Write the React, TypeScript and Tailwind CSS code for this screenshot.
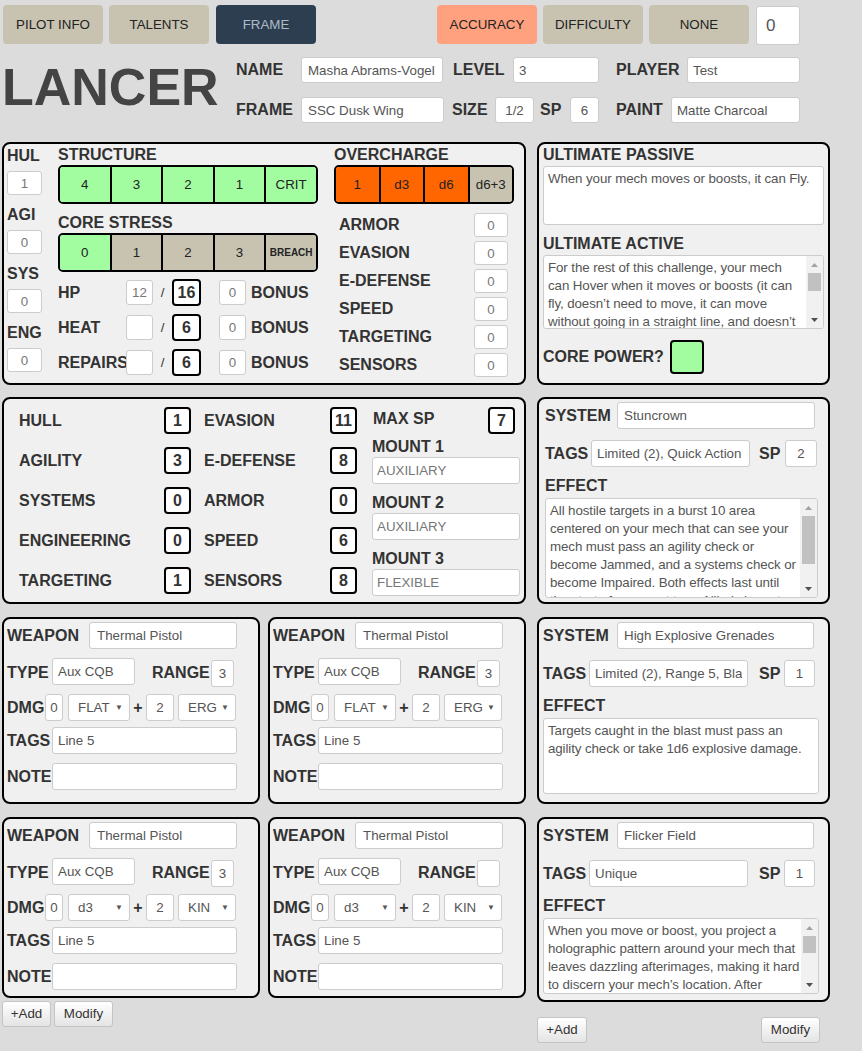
import React from "react";

const L = "font-bold text-[16px] leading-[18px] text-[#333] whitespace-nowrap";
const IN =
  "bg-white border border-[#cccccc] rounded-[3px] text-[13.33px] text-[#555] outline-none";

function Field({ value = "", className = "" }: { value?: string; className?: string }) {
  return <input readOnly value={value} className={`${IN} block ${className}`} />;
}

function Box({ value, className = "" }: { value: string; className?: string }) {
  return (
    <div
      className={`bg-white border-2 border-black rounded-[4px] flex items-center justify-center font-bold text-[16px] text-[#333] ${className}`}
    >
      {value}
    </div>
  );
}

function Area({
  value,
  className = "",
  thumb,
  pad = "pl-[4px] pr-0",
}: {
  value: string;
  className?: string;
  thumb?: string;
  pad?: string;
}) {
  return (
    <div className={`${IN} flex overflow-hidden ${className}`}>
      <div className={`flex-1 ${pad} pt-[3px] leading-[18px] tracking-[-0.1px] overflow-hidden`}>{value}</div>
      {thumb ? (
        <div className="w-[17px] shrink-0 bg-[#f1f1f1] flex flex-col">
          <div className="h-[17px] flex items-center justify-center">
            <svg width="7" height="4" viewBox="0 0 7 4">
              <path d="M0 4 L3.5 0 L7 4 Z" fill="#a3a3a3" />
            </svg>
          </div>
          <div className="flex-1 px-[2px]">
            <div className={`bg-[#c1c1c1] w-full ${thumb}`} />
          </div>
          <div className="h-[17px] flex items-center justify-center">
            <svg width="7" height="4" viewBox="0 0 7 4">
              <path d="M0 0 L3.5 4 L7 0 Z" fill="#505050" />
            </svg>
          </div>
        </div>
      ) : null}
    </div>
  );
}

function Select({ value, className = "" }: { value: string; className?: string }) {
  return (
    <div className={`${IN} h-[27px] flex items-center justify-between pl-[9px] pr-[6px] ${className}`}>
      <span>{value}</span>
      <span className="text-[8px] text-[#555]">▼</span>
    </div>
  );
}

type Cell = { t: string; c: string; small?: boolean };

function Bar({ cells, className = "" }: { cells: Cell[]; className?: string }) {
  return (
    <div className={`flex border-2 border-black rounded-[5px] overflow-hidden h-[39px] ${className}`}>
      {cells.map((c, i) => (
        <div
          key={i}
          className={`flex-1 flex items-center justify-center text-[#222] ${
            c.small ? "text-[10px] font-bold" : "text-[13.33px]"
          } ${i > 0 ? "border-l-2 border-black" : ""} ${c.c}`}
        >
          {c.t}
        </div>
      ))}
    </div>
  );
}

const G = "bg-[#a2fda0]";
const T = "bg-[#c8c3b1]";
const O = "bg-[#ff6600]";

function TopBtn({ children, className = "" }: { children: React.ReactNode; className?: string }) {
  return (
    <div
      className={`w-[100px] h-[39px] rounded-[4px] flex items-center justify-center text-[13.33px] ${className}`}
    >
      {children}
    </div>
  );
}

function SmallBtn({ children, className = "" }: { children: React.ReactNode; className?: string }) {
  return (
    <div
      className={`h-[26px] flex items-center justify-center border border-[#c4c4c4] rounded-[3px] bg-linear-to-b from-white to-[#e4e4e4] text-[13.33px] text-[#333] ${className}`}
    >
      {children}
    </div>
  );
}

function Weapon({
  dmgType,
  kind,
  range,
  h,
}: {
  dmgType: string;
  kind: string;
  range: string;
  h: string;
}) {
  return (
    <div className={`w-[258px] ${h} border-2 border-black rounded-[8px] bg-[#f0f0f0] pl-[3px] pt-[3px]`}>
      <div className="flex items-center h-[27px]">
        <div className={`${L} w-[82px]`}>WEAPON</div>
        <Field value="Thermal Pistol" className="w-[148px] h-[27px] px-[7px]" />
      </div>
      <div className="flex items-center h-[29px] mt-[9px]">
        <div className={`${L} w-[45px]`}>TYPE</div>
        <Field value="Aux CQB" className="w-[83px] h-[27px] px-[5px] self-start" />
        <div className={`${L} w-[59px] ml-[17px]`}>RANGE</div>
        <Field value={range} className="w-[23px] h-[27px] text-center self-end" />
      </div>
      <div className="flex items-center h-[27px] mt-[7px]">
        <div className={`${L} w-[38px]`}>DMG</div>
        <Field value="0" className="w-[18px] h-[27px] text-center" />
        <Select value={dmgType} className="w-[62px] ml-[5px]" />
        <div className="w-[16px] text-center font-bold text-[16px] text-[#333]">+</div>
        <Field value="2" className="w-[28px] h-[27px] text-center" />
        <Select value={kind} className="w-[58px] ml-[4px]" />
      </div>
      <div className="flex items-center h-[27px] mt-[6px]">
        <div className={`${L} w-[45px]`}>TAGS</div>
        <Field value="Line 5" className="w-[185px] h-[27px] px-[5px]" />
      </div>
      <div className="flex items-center h-[27px] mt-[9px]">
        <div className={`${L} w-[45px]`}>NOTE</div>
        <Field value="" className="w-[185px] h-[27px] px-[5px]" />
      </div>
    </div>
  );
}

function System({
  name,
  tags,
  sp,
  effect,
  h,
  areaClass,
  thumb,
  first = false,
}: {
  name: string;
  tags: string;
  sp: string;
  effect: string;
  h: string;
  areaClass: string;
  thumb?: string;
  first?: boolean;
}) {
  return (
    <div
      className={`w-[293px] ${h} border-2 border-black rounded-[8px] bg-[#f0f0f0] pt-[3px] ${
        first ? "pl-[6px]" : "pl-[4px]"
      }`}
    >
      <div className="flex items-center h-[27px]">
        <div className={`${L} ${first ? "w-[72px]" : "w-[74px]"}`}>SYSTEM</div>
        <Field value={name} className={`h-[27px] px-[6px] ${first ? "w-[198px]" : "w-[197px]"}`} />
      </div>
      <div className="flex items-center h-[27px] mt-[11px]">
        <div className={`${L} w-[46px]`}>TAGS</div>
        <Field value={tags} className="w-[159px] h-[27px] px-[5px]" />
        <div className={`${L} ${first ? "w-[26px] ml-[9px]" : "w-[25px] ml-[11px]"}`}>SP</div>
        <Field value={sp} className={`h-[27px] text-center ${first ? "w-[32px]" : "w-[31px]"}`} />
      </div>
      <div className={`${L} mt-[10px]`}>EFFECT</div>
      <Area
        value={effect}
        className={`mt-[3px] ${first ? "w-[273px]" : "w-[276px]"} ${areaClass}`}
        thumb={thumb}
      />
    </div>
  );
}

export default function App() {
  return (
    <div className="w-[862px] min-h-[1051px] bg-[#dcdcdc] font-['Liberation_Sans',Arial,sans-serif] overflow-hidden">
      {/* top buttons */}
      <div className="flex pt-[5px] pl-[3px] items-start">
        <TopBtn className="bg-[#c8c3b1] text-[#222]">PILOT INFO</TopBtn>
        <TopBtn className="bg-[#c8c3b1] text-[#222] ml-[6px]">TALENTS</TopBtn>
        <TopBtn className="bg-[#2c3e4f] text-[#aebac6] ml-[7px]">FRAME</TopBtn>
        <TopBtn className="bg-[#ffa07f] text-[#222] ml-[121px]">ACCURACY</TopBtn>
        <TopBtn className="bg-[#c8c3b1] text-[#222] ml-[6px]">DIFFICULTY</TopBtn>
        <TopBtn className="bg-[#c8c3b1] text-[#222] ml-[6px]">NONE</TopBtn>
        <Field value="0" className="w-[44px] h-[39px] mt-[1px] ml-[7px] px-[9px] text-[17px] text-[#333]" />
      </div>

      {/* header */}
      <div className="flex mt-[12px]">
        <div className="w-[236px] pl-[2px] pt-[4px] text-[52px] leading-none font-bold text-[#444]">LANCER</div>
        <div className="flex flex-col gap-[14px]">
          <div className="flex items-center h-[26px]">
            <div className={`${L} w-[65px]`}>NAME</div>
            <Field value="Masha Abrams-Vogel" className="w-[142px] h-[26px] px-[6px]" />
            <div className={`${L} w-[60px] ml-[10px]`}>LEVEL</div>
            <Field value="3" className="w-[86px] h-[26px] px-[5px]" />
            <div className={`${L} w-[71px] ml-[17px]`}>PLAYER</div>
            <Field value="Test" className="w-[113px] h-[26px] px-[5px]" />
          </div>
          <div className="flex items-center h-[26px]">
            <div className={`${L} w-[65px]`}>FRAME</div>
            <Field value="SSC Dusk Wing" className="w-[143px] h-[26px] px-[6px]" />
            <div className={`${L} w-[43px] ml-[8px]`}>SIZE</div>
            <Field value="1/2" className="w-[39px] h-[26px] text-center" />
            <div className={`${L} w-[30px] ml-[6px]`}>SP</div>
            <Field value="6" className="w-[29px] h-[26px] text-center" />
            <div className={`${L} w-[55px] ml-[17px]`}>PAINT</div>
            <Field value="Matte Charcoal" className="w-[129px] h-[26px] px-[5px]" />
          </div>
        </div>
      </div>

      {/* main */}
      <div className="mt-[19px] pl-[2px] flex flex-col">
        {/* row A */}
        <div className="flex gap-[11px]">
          <div className="w-[524px] h-[243px] border-2 border-black rounded-[8px] bg-[#f0f0f0] flex">
            <div className="w-[54px] pl-[3px] pt-[3px] flex flex-col">
              {[
                ["HUL", "1"],
                ["AGI", "0"],
                ["SYS", "0"],
                ["ENG", "0"],
              ].map(([k, v], i) => (
                <div key={k} className={i > 0 ? "mt-[11px]" : ""}>
                  <div className={L}>{k}</div>
                  <Field value={v} className="mt-[6px] w-[35px] h-[24px] text-center text-[#777]" />
                </div>
              ))}
            </div>
            <div className="w-[260px] pt-[2px] flex flex-col">
              <div className={L}>STRUCTURE</div>
              <Bar
                className="mt-[1px]"
                cells={[
                  { t: "4", c: G },
                  { t: "3", c: G },
                  { t: "2", c: G },
                  { t: "1", c: G },
                  { t: "CRIT", c: G },
                ]}
              />
              <div className={`${L} mt-[10px]`}>CORE STRESS</div>
              <Bar
                className="mt-[1px]"
                cells={[
                  { t: "0", c: G },
                  { t: "1", c: T },
                  { t: "2", c: T },
                  { t: "3", c: T },
                  { t: "BREACH", c: T, small: true },
                ]}
              />
              <div className="mt-[7px] flex flex-col gap-[8px]">
                {[
                  ["HP", "12", "16"],
                  ["HEAT", "", "6"],
                  ["REPAIRS", "", "6"],
                ].map(([k, a, b]) => (
                  <div key={k} className="flex items-center h-[27px]">
                    <div className={`${L} w-[68px]`}>{k}</div>
                    <Field value={a} className="w-[27px] h-[25px] text-center text-[#777]" />
                    <div className="w-[19px] text-center text-[13.33px] text-[#333]">/</div>
                    <Box value={b} className="w-[29px] h-[27px]" />
                    <Field value="0" className="w-[27px] h-[25px] ml-[18px] text-center text-[#777]" />
                    <div className={`${L} ml-[5px]`}>BONUS</div>
                  </div>
                ))}
              </div>
            </div>
            <div className="w-[180px] ml-[16px] pt-[2px] flex flex-col">
              <div className={L}>OVERCHARGE</div>
              <Bar
                className="mt-[1px]"
                cells={[
                  { t: "1", c: O },
                  { t: "d3", c: O },
                  { t: "d6", c: O },
                  { t: "d6+3", c: T },
                ]}
              />
              <div className="mt-[9px] flex flex-col gap-[4px]">
                {["ARMOR", "EVASION", "E-DEFENSE", "SPEED", "TARGETING", "SENSORS"].map((k) => (
                  <div key={k} className="flex items-center justify-between h-[24px] pl-[5px] pr-[6px]">
                    <div className={L}>{k}</div>
                    <Field value="0" className="w-[34px] h-[24px] text-center text-[#777]" />
                  </div>
                ))}
              </div>
            </div>
          </div>

          <div className="w-[293px] h-[243px] border-2 border-black rounded-[8px] bg-[#f0f0f0] px-[4px] pt-[2px]">
            <div className={L}>ULTIMATE PASSIVE</div>
            <Area
              value="When your mech moves or boosts, it can Fly."
              className="mt-[2px] w-[281px] h-[59px]"
              pad="pl-[4px] pr-[2px]"
            />
            <div className={`${L} mt-[10px]`}>ULTIMATE ACTIVE</div>
            <Area
              value="For the rest of this challenge, your mech can Hover when it moves or boosts (it can fly, doesn’t need to move, it can move without going in a straight line, and doesn’t need to land at the end of its movement)."
              className="mt-[2px] w-[281px] h-[74px]"
              thumb="h-[18px]"
              pad="pl-[4px] pr-[2px]"
            />
            <div className="flex items-center mt-[11px]">
              <div className={L}>CORE POWER?</div>
              <div className="w-[34px] h-[34px] ml-[6px] border-2 border-black rounded-[4px] bg-[#a2fda0]" />
            </div>
          </div>
        </div>

        {/* row B */}
        <div className="flex gap-[11px] mt-[12px]">
          <div className="w-[524px] h-[207px] border-2 border-black rounded-[8px] bg-[#f0f0f0] flex pt-[8px]">
            <div className="grid grid-cols-[145px_27px_139px_27px] gap-y-[13px] ml-[15px] h-fit">
              {[
                ["HULL", "1", "EVASION", "11"],
                ["AGILITY", "3", "E-DEFENSE", "8"],
                ["SYSTEMS", "0", "ARMOR", "0"],
                ["ENGINEERING", "0", "SPEED", "6"],
                ["TARGETING", "1", "SENSORS", "8"],
              ].map(([a, av, b, bv]) => (
                <React.Fragment key={a}>
                  <div className={`${L} h-[27px] flex items-center`}>{a}</div>
                  <Box value={av} className="w-[27px] h-[27px]" />
                  <div className={`${L} h-[27px] flex items-center pl-[13px]`}>{b}</div>
                  <Box value={bv} className="w-[27px] h-[27px]" />
                </React.Fragment>
              ))}
            </div>
            <div className="ml-[15px] w-[148px] flex flex-col">
              <div className="flex items-center justify-between h-[27px] pr-[5px]">
                <div className={`${L} pl-[1px] -mt-[3px]`}>MAX SP</div>
                <Box value="7" className="w-[27px] h-[27px]" />
              </div>
              <div className={`${L} mt-[4px]`}>MOUNT 1</div>
              <Field value="AUXILIARY" className="mt-[1px] w-[148px] h-[27px] px-[4px] text-[#777]" />
              <div className={`${L} mt-[10px]`}>MOUNT 2</div>
              <Field value="AUXILIARY" className="mt-[1px] w-[148px] h-[27px] px-[4px] text-[#777]" />
              <div className={`${L} mt-[10px]`}>MOUNT 3</div>
              <Field value="FLEXIBLE" className="mt-[1px] w-[148px] h-[27px] px-[4px] text-[#777]" />
            </div>
          </div>
          <System
            first
            name="Stuncrown"
            tags="Limited (2), Quick Action"
            sp="2"
            effect="All hostile targets in a burst 10 area centered on your mech that can see your mech must pass an agility check or become Jammed, and a systems check or become Impaired. Both effects last until the start of your next turn. Allied characters are unaffected."
            h="h-[207px]"
            areaClass="h-[100px]"
            thumb="h-[48px]"
          />
        </div>

        {/* row C */}
        <div className="flex gap-[11px] mt-[13px]">
          <div className="flex gap-[8px]">
            <Weapon dmgType="FLAT" kind="ERG" range="3" h="h-[187px]" />
            <Weapon dmgType="FLAT" kind="ERG" range="3" h="h-[187px]" />
          </div>
          <System
            name="High Explosive Grenades"
            tags="Limited (2), Range 5, Blast 1"
            sp="1"
            effect="Targets caught in the blast must pass an agility check or take 1d6 explosive damage."
            h="h-[187px]"
            areaClass="h-[76px]"
          />
        </div>

        {/* row D */}
        <div className="flex gap-[11px] mt-[13px] items-start">
          <div className="flex flex-col">
            <div className="flex gap-[8px]">
              <Weapon dmgType="d3" kind="KIN" range="3" h="h-[181px]" />
              <Weapon dmgType="d3" kind="KIN" range="" h="h-[181px]" />
            </div>
            <div className="flex gap-[3px] mt-[3px]">
              <SmallBtn className="w-[49px]">+Add</SmallBtn>
              <SmallBtn className="w-[59px]">Modify</SmallBtn>
            </div>
          </div>
          <div className="flex flex-col">
            <System
              name="Flicker Field"
              tags="Unique"
              sp="1"
              effect="When you move or boost, you project a holographic pattern around your mech that leaves dazzling afterimages, making it hard to discern your mech’s location. After moving, you gain soft cover until the start of your next turn."
              h="h-[185px]"
              areaClass="h-[76px]"
              thumb="h-[17px]"
            />
            <div className="flex justify-between pr-[10px] mt-[15px]">
              <SmallBtn className="w-[50px]">+Add</SmallBtn>
              <SmallBtn className="w-[59px]">Modify</SmallBtn>
            </div>
          </div>
        </div>
      </div>
    </div>
  );
}
